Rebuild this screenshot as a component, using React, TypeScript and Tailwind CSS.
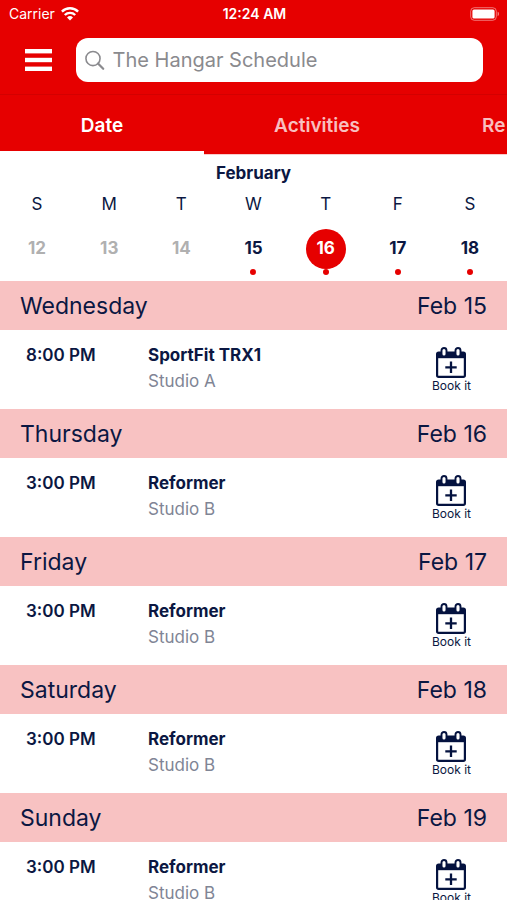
type Day = { letter: string; date: number; past?: boolean; selected?: boolean };
type Session = { day: string; date: string; time: string; title: string; room: string };

const week: Day[] = [
  { letter: "S", date: 12, past: true },
  { letter: "M", date: 13, past: true },
  { letter: "T", date: 14, past: true },
  { letter: "W", date: 15 },
  { letter: "T", date: 16, selected: true },
  { letter: "F", date: 17 },
  { letter: "S", date: 18 },
];

const sessions: Session[] = [
  { day: "Wednesday", date: "Feb 15", time: "8:00 PM", title: "SportFit TRX1", room: "Studio A" },
  { day: "Thursday", date: "Feb 16", time: "3:00 PM", title: "Reformer", room: "Studio B" },
  { day: "Friday", date: "Feb 17", time: "3:00 PM", title: "Reformer", room: "Studio B" },
  { day: "Saturday", date: "Feb 18", time: "3:00 PM", title: "Reformer", room: "Studio B" },
  { day: "Sunday", date: "Feb 19", time: "3:00 PM", title: "Reformer", room: "Studio B" },
];

function WifiIcon() {
  return (
    <svg width="18" height="14" viewBox="0 0 18 14" fill="none" stroke="white" strokeWidth="2.4" aria-hidden="true">
      <path d="M0.9 4.6a11.5 11.5 0 0 1 16.2 0" />
      <path d="M3.8 8a7.4 7.4 0 0 1 10.4 0" />
      <path d="M9 13.4 6 10.4a4.3 4.3 0 0 1 6 0Z" fill="white" stroke="none" />
    </svg>
  );
}

function BatteryIcon() {
  return (
    <svg width="30" height="14" viewBox="0 0 30 14" fill="none" aria-hidden="true">
      <rect x="0.7" y="0.7" width="25.6" height="12.6" rx="3.6" stroke="white" strokeOpacity="0.45" strokeWidth="1" />
      <rect x="2.4" y="2.4" width="22.2" height="9.2" rx="1.6" fill="white" />
      <path d="M27.6 4.8c1.9.6 1.9 3.8 0 4.4Z" fill="white" fillOpacity="0.5" />
    </svg>
  );
}

function MenuIcon() {
  return (
    <svg width="27" height="22" viewBox="0 0 27 22" fill="white" aria-hidden="true">
      <rect width="27" height="4.4" />
      <rect y="8.8" width="27" height="4.4" />
      <rect y="17.6" width="27" height="4.4" />
    </svg>
  );
}

function SearchIcon() {
  return (
    <svg width="21" height="21" viewBox="0 0 21 21" fill="none" stroke="#8a8a8e" aria-hidden="true">
      <circle cx="8.6" cy="8.4" r="7.6" strokeWidth="1.7" />
      <path d="m14 13.8 5.6 5.6" strokeWidth="2.4" strokeLinecap="round" />
    </svg>
  );
}

function CalendarPlusIcon() {
  return (
    <svg width="30" height="31" viewBox="0 0 30 31" fill="none" aria-hidden="true">
      <rect x="1.1" y="5.5" width="27.8" height="24.4" rx="1.6" stroke="#04123f" strokeWidth="2.2" />
      <path d="M1 6h28v5.2H1Z" fill="#04123f" />
      <rect x="5.5" y="1" width="5" height="8.4" rx="2.5" fill="white" stroke="#04123f" strokeWidth="1.9" />
      <rect x="19.5" y="1" width="5" height="8.4" rx="2.5" fill="white" stroke="#04123f" strokeWidth="1.9" />
      <path d="M15 14.6v11.4M9.3 20.3h11.4" stroke="#04123f" strokeWidth="2.3" />
    </svg>
  );
}

function StatusBar() {
  return (
    <div className="grid h-7 grid-cols-3 items-center pr-[7px] pl-[9px] text-sm text-white">
      <div className="flex items-center gap-1.5">
        <span>Carrier</span>
        <WifiIcon />
      </div>
      <span className="text-center font-semibold">12:24 AM</span>
      <div className="flex justify-end">
        <BatteryIcon />
      </div>
    </div>
  );
}

function Tabs() {
  return (
    <nav className="flex h-[61px] overflow-hidden border-t border-[#d40000] text-[19px] font-semibold text-white">
      <button className="w-[204px] shrink-0 border-b-4 border-white pt-1.5">Date</button>
      <button className="w-[226px] shrink-0 border-b border-white/80 pt-[3px] text-white/75">Activities</button>
      <button className="grow border-b border-white/80 pt-[3px] pl-[52px] text-left text-white/75">Re</button>
    </nav>
  );
}

function WeekStrip() {
  return (
    <section className="bg-white px-px pt-1.5">
      <h1 className="text-center text-[17px] leading-6 font-bold">February</h1>
      <div className="grid grid-cols-7">
        {week.map((day) => (
          <div key={day.date} className="flex flex-col items-center">
            <span className="mt-[7px] text-[17px] leading-6">{day.letter}</span>
            <button
              className={`mt-[13px] size-10 rounded-full text-[17px] font-bold ${
                day.selected ? "bg-[#e60000] text-white" : day.past ? "text-[#b0b0b0]" : ""
              }`}
            >
              {day.date}
            </button>
            <span className={`size-1.5 rounded-full ${day.past ? "" : "bg-[#e60000]"}`} />
          </div>
        ))}
      </div>
    </section>
  );
}

function SessionBlock({ session }: { session: Session }) {
  return (
    <li>
      <h2 className="flex h-[49px] items-center justify-between bg-[#f8c2c2] px-5 pt-px text-[23px] font-normal">
        <span>{session.day}</span>
        <span>{session.date}</span>
      </h2>
      <div className="flex h-[79px] items-start pt-[13px] pr-9 pl-[26px]">
        <span className="w-[122px] shrink-0 text-[17px] leading-6 font-semibold">{session.time}</span>
        <div className="grow">
          <h3 className="text-[17px] leading-6 font-bold">{session.title}</h3>
          <p className="text-[17px] leading-7 text-[#808595]">{session.room}</p>
        </div>
        <button className="flex flex-col items-center pt-1 text-xs leading-4">
          <CalendarPlusIcon />
          Book it
        </button>
      </div>
    </li>
  );
}

export default function App() {
  return (
    <div className="flex h-screen flex-col overflow-hidden bg-white font-['Inter','Liberation_Sans',sans-serif] text-[#0b1742]">
      <header className="shrink-0 bg-[#e60000]">
        <StatusBar />
        <div className="flex h-[66px] items-start gap-6 pt-[10px] pr-6 pl-[25px]">
          <button aria-label="Menu" className="flex h-11 items-center">
            <MenuIcon />
          </button>
          <label className="flex h-11 grow items-center gap-2 rounded-xl bg-white px-[9px]">
            <SearchIcon />
            <input
              type="search"
              aria-label="Search"
              placeholder="The Hangar Schedule"
              className="w-full min-w-0 text-xl outline-none placeholder:text-[#8a8a8e]"
            />
          </label>
        </div>
        <Tabs />
      </header>
      <WeekStrip />
      <ul className="mt-1.5 min-h-0 grow overflow-y-auto [scrollbar-width:none]">
        {sessions.map((session) => (
          <SessionBlock key={session.date} session={session} />
        ))}
      </ul>
    </div>
  );
}
